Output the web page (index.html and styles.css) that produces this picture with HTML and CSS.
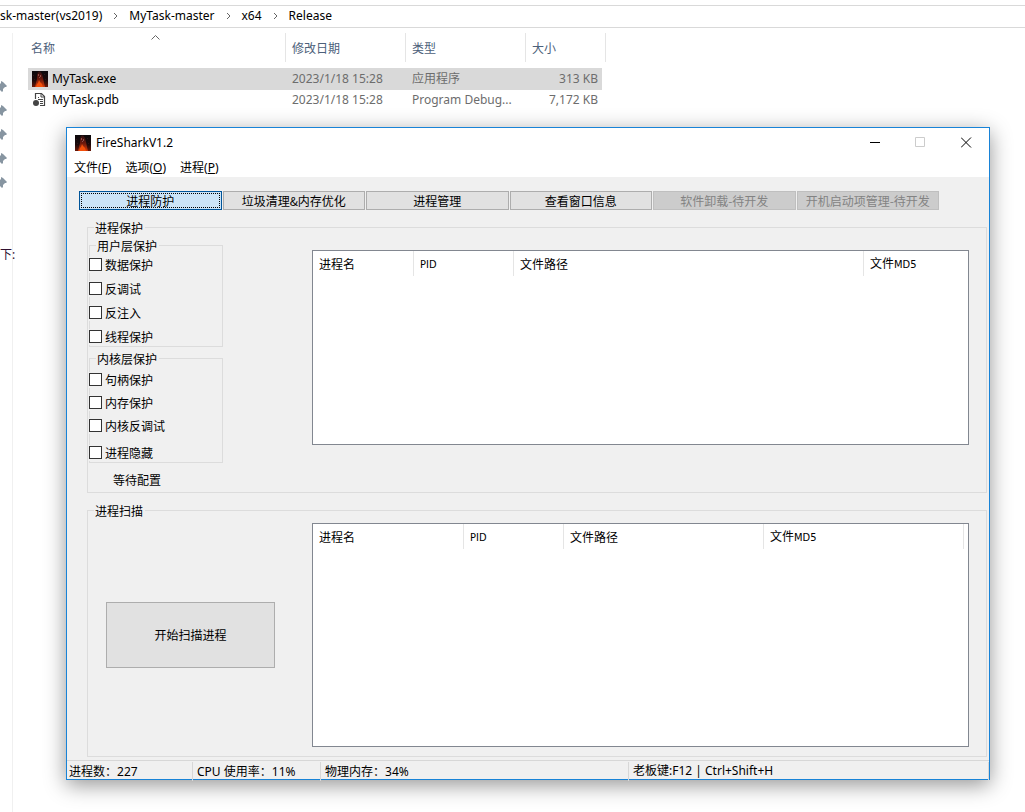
FILE: index.html
```html
<!DOCTYPE html>
<html lang="zh-CN">
<head>
<meta charset="utf-8">
<title>FireSharkV1.2</title>
<link rel="stylesheet" href="styles.css">
</head>
<body>
<svg class="defs" aria-hidden="true">
  <defs>
    <linearGradient id="flame" x1="0" y1="0" x2="0" y2="1">
      <stop offset="0" stop-color="#2c1012"/>
      <stop offset=".5" stop-color="#6a180c"/>
      <stop offset="1" stop-color="#d83c08"/>
    </linearGradient>
    <linearGradient id="glow" x1="0" y1="0" x2="0" y2="1">
      <stop offset="0" stop-color="#0b090c"/>
      <stop offset=".6" stop-color="#1c090a"/>
      <stop offset="1" stop-color="#6a1808"/>
    </linearGradient>
    <symbol id="fire" viewBox="0 0 16 16">
      <rect width="16" height="16" fill="url(#glow)"/>
      <path d="M3 16l1-4 1-4 0-4 1-3 2-1 2 3 1 4 1 5 1 4z" fill="url(#flame)"/>
      <path d="M6 3h1v2H6zM8 4h1v2H8zM7 6h1v1H7z" fill="#93504c"/>
      <path d="M4 16l1-3 1-1 1-3 1 2 2 2 1 3z" fill="#f4500a"/>
      <path d="M1 4h1v1H1zM12 3h1v1h-1zM2 8h1v1H2zM13 8h1v1h-1z" fill="#2b1518"/>
    </symbol>
    <symbol id="pin" viewBox="0 0 12 12">
      <path d="M8 1l4 4-1 1-1 0-2 2 0 2-1 1-2-2-3 2 2-3-3-3 1-1 2 0 2-2 0-2z" fill="#8795a1"/>
    </symbol>
  </defs>
</svg>

<div class="explorer">
  <nav class="path" aria-label="路径">
    <span>sk-master(vs2019)</span>
    <svg class="chev" viewBox="0 0 5 8"><path d="M1 1l3 3-3 3"/></svg>
    <span>MyTask-master</span>
    <svg class="chev" viewBox="0 0 5 8"><path d="M1 1l3 3-3 3"/></svg>
    <span>x64</span>
    <svg class="chev" viewBox="0 0 5 8"><path d="M1 1l3 3-3 3"/></svg>
    <span>Release</span>
  </nav>
  <div class="panes">
    <aside class="side">
      <svg class="pin"><use href="#pin"/></svg>
      <svg class="pin"><use href="#pin"/></svg>
      <svg class="pin"><use href="#pin"/></svg>
      <svg class="pin"><use href="#pin"/></svg>
      <svg class="pin"><use href="#pin"/></svg>
      <span class="side-text">下:</span>
    </aside>
    <table class="files">
      <colgroup><col class="f-name"><col class="f-mid"><col class="f-mid"><col class="f-size"></colgroup>
      <thead>
        <tr>
          <th>名称<svg class="sort" viewBox="0 0 9 5"><path d="M.5 4.500l4-4 4 4"/></svg></th>
          <th>修改日期</th><th>类型</th><th>大小</th>
        </tr>
      </thead>
      <tbody>
        <tr class="selected">
          <td><span class="file"><svg class="icon"><use href="#fire"/></svg>MyTask.exe</span></td>
          <td>2023/1/18 15:28</td><td>应用程序</td><td>313 KB</td>
        </tr>
        <tr>
          <td><span class="file"><svg class="icon" viewBox="0 0 16 16"><path d="M3.500 7V1.500h6l3 3V13.500H8" fill="none" stroke="#444" stroke-width="1.200"/><path d="M9 1v4h4M6 5.500h1M6 7.500h5M8 9.500h3M8 11.500h3" fill="none" stroke="#444"/><circle cx="4" cy="11" r="3" fill="#444"/></svg>MyTask.pdb</span></td>
          <td>2023/1/18 15:28</td><td>Program Debug...</td><td>7,172 KB</td>
        </tr>
      </tbody>
    </table>
  </div>
</div>

<main class="window">
  <header class="titlebar">
    <svg class="icon"><use href="#fire"/></svg>
    <h1>FireSharkV1.2</h1>
    <div class="controls">
      <button aria-label="最小化"><svg viewBox="0 0 11 11"><path d="M1 5.500h10" stroke="#000"/></svg></button>
      <button aria-label="最大化" disabled><svg viewBox="0 0 11 11"><path d="M.5 .5h9v9h-9z" stroke="#ccc"/></svg></button>
      <button aria-label="关闭"><svg viewBox="0 0 11 11"><path d="M0 .5l10 10M10 .5l-10 10" stroke="#000"/></svg></button>
    </div>
  </header>
  <nav class="menu">
    <button>文件(<u>F</u>)</button>
    <button>选项(<u>O</u>)</button>
    <button>进程(<u>P</u>)</button>
  </nav>

  <div class="tabs">
    <button class="active">进程防护</button>
    <button>垃圾清理&amp;内存优化</button>
    <button>进程管理</button>
    <button>查看窗口信息</button>
    <button disabled>软件卸载-待开发</button>
    <button disabled>开机启动项管理-待开发</button>
  </div>

  <fieldset class="group protect">
    <legend>进程保护</legend>
    <div class="options">
      <fieldset class="checks user">
        <legend>用户层保护</legend>
        <label><input type="checkbox">数据保护</label>
        <label><input type="checkbox">反调试</label>
        <label><input type="checkbox">反注入</label>
        <label><input type="checkbox">线程保护</label>
      </fieldset>
      <fieldset class="checks kernel">
        <legend>内核层保护</legend>
        <label><input type="checkbox">句柄保护</label>
        <label><input type="checkbox">内存保护</label>
        <label><input type="checkbox">内核反调试</label>
        <label><input type="checkbox">进程隐藏</label>
      </fieldset>
      <p class="state">等待配置</p>
    </div>
    <div class="list">
      <table>
        <colgroup><col class="w101"><col class="w100"><col class="w350"><col></colgroup>
        <thead><tr><th>进程名</th><th><span class="latin">PID</span></th><th>文件路径</th><th class="open">文件<span class="latin">MD5</span></th></tr></thead>
      </table>
    </div>
  </fieldset>

  <fieldset class="group scan">
    <legend>进程扫描</legend>
    <div class="action"><button class="start">开始扫描进程</button></div>
    <div class="list">
      <table>
        <colgroup><col class="w151"><col class="w100"><col class="w200"><col class="w200"><col></colgroup>
        <thead><tr><th>进程名</th><th><span class="latin">PID</span></th><th>文件路径</th><th>文件<span class="latin">MD5</span></th><td></td></tr></thead>
      </table>
    </div>
  </fieldset>

  <footer class="status">
    <span>进程数<b>：</b>227</span>
    <span>CPU 使用率<b>：</b>11%</span>
    <span>物理内存<b>：</b>34%</span>
    <span>老板键:F12 | Ctrl+Shift+H</span>
  </footer>
</main>
</body>
</html>
```
FILE: styles.css
```css
* { box-sizing: border-box; }
html, body { height: 100%; }
body {
  margin: 0;
  background: #fff;
  color: #000;
  font: 12px/16px "Noto Sans", "Noto Sans CJK SC", sans-serif;
  overflow: hidden;
  position: relative;
}
button, input { font: inherit; color: inherit; }
button { padding: 0; }
th { font-weight: normal; text-align: left; }
.defs { position: absolute; width: 0; height: 0; }
.icon { width: 16px; height: 16px; flex: none; }

/* Explorer */
.explorer { display: flex; flex-direction: column; height: 100%; padding-top: 5px; }
.path {
  display: flex;
  align-items: center;
  gap: 11px;
  height: 23px;
  padding-bottom: 1px;
  border: solid #d9d9d9;
  border-width: 1px 0;
}
.chev { width: 5px; height: 8px; fill: none; stroke: #666; stroke-width: 1px; }
.panes { display: flex; flex: 1; align-items: flex-start; padding-top: 5px; }
.side {
  width: 13px;
  align-self: stretch;
  display: flex;
  flex-direction: column;
  gap: 12px;
  padding-top: 48px;
  border-right: 1px solid #f0f0f0;
}
.pin { width: 12px; height: 12px; margin-left: -5px; flex: none; }
.side-text { margin-top: 46px; color: #301030; white-space: nowrap; }
.files {
  width: 578px;
  margin-left: 15px;
  table-layout: fixed;
  border-spacing: 0;
}
.f-name { width: 258px; }
.f-mid { width: 120px; }
.f-size { width: 80px; }
.files th {
  position: relative;
  height: 29px;
  padding: 2px 6px 0;
  border-right: 1px solid #e5e5e5;
  color: #4c607a;
}
.files th:first-child { padding-left: 3px; }
.sort {
  position: absolute;
  top: 2px;
  left: 123px;
  width: 9px;
  height: 5px;
  fill: none;
  stroke: #666;
}
.files tbody::before { content: ""; display: block; height: 6px; }
.files td { height: 20px; padding: 0 6px; color: #6d6d6d; white-space: nowrap; }
.files td:first-child { padding-left: 4px; color: #000; }
.files td:last-child { padding-right: 4px; border-right: 4px solid #fff; text-align: right; }
.files .selected td { height: 22px; background: #d9d9d9; background-clip: padding-box; }
.file { display: flex; align-items: center; gap: 4px; }

/* Application window */
.window {
  position: absolute;
  inset: 127px 35px 32px 66px;
  display: flex;
  flex-direction: column;
  border: 1px solid #1883d7;
  background: #f0f0f0;
  box-shadow: 0 5px 20px rgba(0, 0, 0, .42);
  font-family: "Noto Sans CJK SC", sans-serif;
}
.titlebar { display: flex; align-items: center; height: 29px; padding-left: 8px; background: #fff; }
.titlebar h1 { margin: 0 0 0 5px; font: 12px/16px "Noto Sans", sans-serif; }
.controls { display: flex; margin-left: auto; }
.controls button { width: 46px; height: 28px; border: 0; background: none; }
.controls svg { display: block; width: 11px; height: 11px; margin: 0 auto; fill: none; }
.menu { display: flex; gap: 14px; height: 20px; padding: 3px 7px 0; background: #fff; }
.menu button { border: 0; background: none; height: 16px; font-family: "Noto Sans", "Noto Sans CJK SC", sans-serif; }
.tabs {
  display: grid;
  grid-template-columns: repeat(6, minmax(0, 1fr));
  gap: 1px;
  padding: 14px 50px 11px 12px;
}
.tabs button {
  height: 19px;
  border: 1px solid #adadad;
  background: #e1e1e1;
  line-height: 17px;
  white-space: nowrap;
}
.tabs .active {
  border-color: #005499;
  background: #cce4f7;
  outline: 1px dotted #000;
  outline-offset: -3px;
}
.tabs button:disabled { border-color: #bfbfbf; background: #ccc; color: #838383; }

.group, .checks { margin: 0; padding: 0; border: 1px solid #dcdcdc; min-width: 0; }
legend { margin-left: 6px; padding: 0 2px 0 1px; line-height: 13px; }
.group { display: flex; margin: 0 2px 0 20px; }
.protect { margin-bottom: 11px; }
.scan { flex: 1; }
.options { width: 224px; flex: none; padding: 5px 0 4px 1px; }
.checks { display: flex; flex-direction: column; align-items: flex-start; gap: 8px; width: 134px; }
.checks label {
  display: flex;
  align-items: flex-start;
  gap: 3px;
  height: 16px;
  margin-left: -1px;
  background: #f0f0f0;
}
.user { padding: 5px 0 1px; }
.kernel { gap: 7px; margin-top: 5px; padding: 7px 0 1px; }
.kernel label:last-child { margin-top: 4px; }
.checks input {
  appearance: none;
  width: 13px;
  height: 13px;
  margin: 1px 0 0;
  border: 1px solid #333;
  background: #fff;
}
.checks input:checked { background: #333; }
.state { margin: 9px 0 0 24px; }

.list { flex: 1; min-width: 0; border: 1px solid #828790; background: #fff; }
.protect .list { margin: 16px 17px 47px 0; }
.scan .list { margin: 6px 17px 9px 0; }
.list table { width: 100%; table-layout: fixed; border-spacing: 0; }
.list th { height: 25px; padding: 0 6px; border-right: 1px solid #e5e5e5; white-space: nowrap; }
.list .open { border-right: 0; }
.w100 { width: 100px; }
.w101 { width: 101px; }
.w151 { width: 151px; }
.w200 { width: 200px; }
.w350 { width: 350px; }
.latin { font-family: "DejaVu Sans Condensed", sans-serif; font-size: 11px; }
.action { display: flex; align-items: center; width: 224px; flex: none; padding: 0 0 3px 18px; }
.start { width: 169px; height: 66px; border: 1px solid #adadad; background: #e1e1e1; }

.status {
  display: grid;
  grid-template-columns: 126px 128px 308px 1fr;
  height: 19px;
  margin-top: 3px;
  border-top: 1px solid #d7d7d7;
  font-family: "Noto Sans", "Noto Sans CJK SC", sans-serif;
  line-height: 18px;
}
.status span { margin: 1px 0; padding-left: 4px; border-right: 1px solid #d7d7d7; white-space: nowrap; }
.status span:first-child { padding-left: 2px; }
.status b { font-family: "Noto Sans CJK TC", sans-serif; font-weight: normal; }
```
